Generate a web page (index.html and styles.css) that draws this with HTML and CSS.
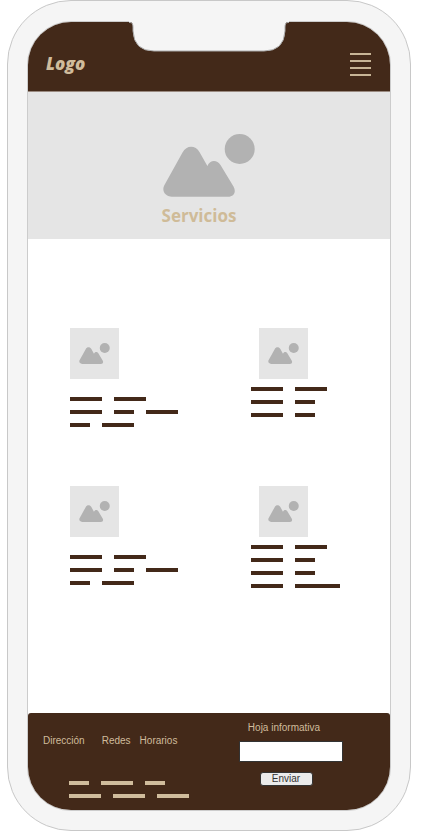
FILE: index.html
```html
<!DOCTYPE html>
<html lang="es">
<head>
<meta charset="utf-8">
<meta name="viewport" content="width=device-width, initial-scale=1">
<title>Servicios</title>
<link rel="stylesheet" href="styles.css">
</head>
<body>
<svg class="defs" aria-hidden="true">
  <symbol id="picture" viewBox="0 0 92 63">
    <circle cx="76.7" cy="15" r="15"/>
    <path d="M9 62.7C2 62.7-1.4 56.5 1.2 51.5L19.5 18.5C23.5 11 32.5 11 36.6 18.2L44.4 32C47 25.5 54 25.5 57.5 31L70.5 52.5C73.5 58 71 62.7 65 62.7Z"/>
  </symbol>
</svg>
<div class="phone">
  <svg class="notch" viewBox="0 0 160 31" aria-hidden="true">
    <path class="notch-fill" d="M0 0V1H1Q4 1 4 6V10Q5 30 25 30H135Q155 30 156 10V6Q156 1 159 1H160V0Z"/>
    <path class="notch-line" d="M0 1.5H1Q4 1.5 4 6V10Q5 30 25 30H135Q155 30 156 10V6Q156 1.5 159 1.5H160"/>
  </svg>
  <div class="screen">
    <header class="topbar">
      <a class="logo" href="#">Logo</a>
      <button class="menu" type="button" aria-label="Menú"><span></span><span></span><span></span><span></span></button>
    </header>
    <section class="hero">
      <svg class="hero-picture" aria-hidden="true"><use href="#picture"/></svg>
      <h1>Servicios</h1>
    </section>
    <main class="services">
      <article class="card">
        <div class="thumb"><svg aria-hidden="true"><use href="#picture"/></svg></div>
        <div class="lines">
          <div><i class="w5"></i><i class="w5"></i></div>
          <div><i class="w5"></i><i class="w3"></i><i class="w5"></i></div>
          <div><i class="w3"></i><i class="w5"></i></div>
        </div>
      </article>
      <article class="card indented">
        <div class="thumb"><svg aria-hidden="true"><use href="#picture"/></svg></div>
        <div class="lines">
          <div><i class="w5"></i><i class="w5"></i></div>
          <div><i class="w5"></i><i class="w3"></i></div>
          <div><i class="w5"></i><i class="w3"></i></div>
        </div>
      </article>
      <article class="card">
        <div class="thumb"><svg aria-hidden="true"><use href="#picture"/></svg></div>
        <div class="lines">
          <div><i class="w5"></i><i class="w5"></i></div>
          <div><i class="w5"></i><i class="w3"></i><i class="w5"></i></div>
          <div><i class="w3"></i><i class="w5"></i></div>
        </div>
      </article>
      <article class="card indented">
        <div class="thumb"><svg aria-hidden="true"><use href="#picture"/></svg></div>
        <div class="lines">
          <div><i class="w5"></i><i class="w5"></i></div>
          <div><i class="w5"></i><i class="w3"></i></div>
          <div><i class="w5"></i><i class="w3"></i></div>
          <div><i class="w5"></i><i class="w7"></i></div>
        </div>
      </article>
    </main>
    <footer class="footer">
      <div class="info">
        <nav class="links">
          <a class="address" href="#">Dirección</a>
          <a href="#">Redes</a>
          <a href="#">Horarios</a>
        </nav>
        <div class="lines light">
          <div><i class="w3"></i><i class="w5"></i><i class="w3"></i></div>
          <div><i class="w5"></i><i class="w5"></i><i class="w5"></i></div>
        </div>
      </div>
      <form class="newsletter">
        <label for="email">Hoja informativa</label>
        <input id="email" type="text">
        <button type="button">Enviar</button>
      </form>
    </footer>
  </div>
</div>
</body>
</html>
```
FILE: styles.css
```css
* {
  box-sizing: border-box;
}

body {
  margin: 0;
  background: #fff;
  font-family: "Liberation Sans", Arial, sans-serif;
}

.defs {
  position: absolute;
  width: 0;
  height: 0;
}

.phone {
  position: relative;
  margin: 0 11px 5px 7px;
  padding: 20px 19px 19px;
  border: 1px solid #c8c8c8;
  border-radius: 64px;
  background: #f5f5f5;
}

.screen {
  overflow: hidden;
  border: 1px solid #ccc;
  border-radius: 44px;
  background: #fff;
}

/* Speaker cut-out over the top edge of the screen */
.notch {
  position: absolute;
  top: 20px;
  left: 50%;
  width: 160px;
  height: 31px;
  margin-left: -80px;
}

.notch-fill {
  fill: #f5f5f5;
}

.notch-line {
  fill: none;
  stroke: #aaa;
}

.topbar {
  display: flex;
  align-items: center;
  justify-content: space-between;
  height: 70px;
  padding: 15px 19px 0 18px;
  background: #432919;
  border-bottom: 1px solid #9a8a80;
}

.logo {
  color: #d0bc9c;
  font: italic 800 17px/28px "Open Sans", sans-serif;
  text-decoration: none;
}

.menu {
  display: flex;
  flex-direction: column;
  gap: 5px;
  width: 21px;
  padding: 0;
  border: 0;
  background: none;
}

.menu span {
  width: 100%;
  height: 2px;
  background: #c8b596;
}

.hero {
  display: flex;
  flex-direction: column;
  align-items: center;
  height: 147px;
  padding-top: 42px;
  background: #e5e5e5;
}

.hero-picture {
  width: 92px;
  height: 63px;
  fill: #b2b2b2;
}

.hero h1 {
  margin: 7px 20px 0 0;
  color: #cfbb98;
  font: bold 17px/24px "Open Sans", sans-serif;
}

.services {
  display: grid;
  grid-template-columns: 1fr 1fr;
  row-gap: 59px;
  padding: 89px 0 125px;
}

.card {
  padding-left: 42px;
}

.thumb {
  width: 49px;
  height: 51px;
  padding: 15px 9px;
  background: #e5e5e5;
}

.thumb svg {
  display: block;
  width: 31px;
  height: 21px;
  fill: #b2b2b2;
}

.card .lines {
  margin-top: 18px;
}

.indented .thumb {
  margin-left: 8px;
}

.indented .lines {
  margin-top: 8px;
}

.lines {
  display: flex;
  flex-direction: column;
  gap: 9px;
  color: #432919;
}

.lines div {
  display: flex;
  gap: 12px;
}

.lines i {
  height: 4px;
  background: currentColor;
}

.lines.light {
  color: #d0bc9c;
}

.w3 {
  width: 20px;
}

.w5 {
  width: 32px;
}

.w7 {
  width: 45px;
}

.footer {
  display: flex;
  justify-content: space-between;
  height: 97px;
  padding-right: 47px;
  border-radius: 3px 3px 0 0;
  background: #432919;
  color: #d0bc9c;
  font-size: 10px;
  line-height: 14px;
}

.links {
  display: flex;
  gap: 9px;
  padding: 21px 0 0 15px;
}

.links a {
  color: inherit;
  text-decoration: none;
}

.address {
  margin-right: 8px;
}

.light {
  margin: 33px 0 0 41px;
}

.newsletter {
  display: flex;
  flex-direction: column;
  align-items: center;
  width: 104px;
  padding-top: 8px;
}

.newsletter label {
  margin-right: 14px;
}

.newsletter input {
  width: 100%;
  height: 21px;
  margin: 6px 0 10px;
  padding: 0 4px;
  border: 1px solid #333;
  background: #fff;
  font: inherit;
}

.newsletter button {
  width: 53px;
  height: 14px;
  margin-right: 10px;
  padding: 0;
  border: 1px solid #333;
  border-radius: 3px;
  background: #ebebeb;
  color: #333;
  font: inherit;
  line-height: 12px;
}
```
